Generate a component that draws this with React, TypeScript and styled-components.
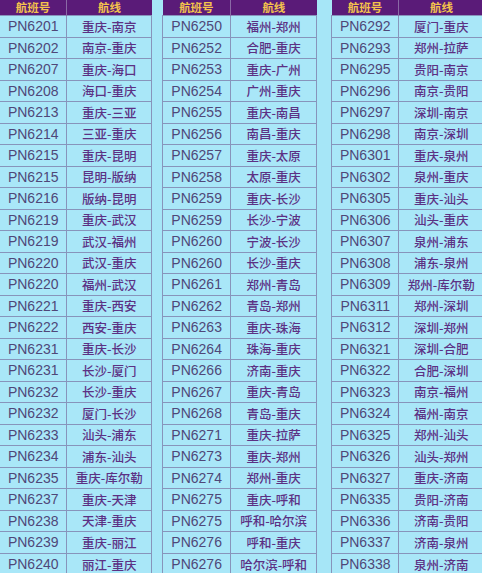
import React from "react";
import styled, { createGlobalStyle } from "styled-components";

const GlobalStyle = createGlobalStyle`
html, body {
    margin: 0;
    padding: 0;
    background: #a6e6f7;
    overflow: hidden;
}
`

const Page = styled.div`
display: flex;
align-items: flex-start;
width: 482px;
height: 573px;
overflow: hidden;
background: #a6e6f7;
`

interface TableProps {
    $width: number,
    $gap: number,
}
const Table = styled.table<TableProps>`
width: ${props => props.$width}px;
margin-left: ${props => props.$gap}px;
flex-shrink: 0;
border-collapse: collapse;
table-layout: fixed;
background: #a9e7f8;
`

const HeadCell = styled.th`
height: 15px;
padding: 0;
background: #5a1b78;
color: #f4c34c;
font-family: "Noto Sans CJK SC", sans-serif;
font-size: 11.5px;
font-weight: 700;
line-height: 15px;
text-align: center;
border-right: 1px solid #8a6aa6;
&:last-child{
    border-right: none;
}
`

const Row = styled.tr`
height: 21.5px;
border-top: 1px solid #8794bb;
`

interface CellProps {
    $code?: boolean,
}
const Cell = styled.td<CellProps>`
padding: 0;
text-align: center;
border-left: 1px solid #8794bb;
border-right: 1px solid #8794bb;
white-space: nowrap;
overflow: hidden;
${props => props.$code
    ? `
    font-family: "Liberation Sans", Arial, sans-serif;
    font-size: 14px;
    color: #4f4778;
    width: 44%;
    `
    : `
    font-family: "Noto Sans CJK SC", sans-serif;
    font-size: 12.5px;
    font-weight: 500;
    color: #5c3184;
    `
}
`

type Flight = [string, string];

const left: Flight[] = [
    ["PN6201", "重庆-南京"], ["PN6202", "南京-重庆"], ["PN6207", "重庆-海口"], ["PN6208", "海口-重庆"],
    ["PN6213", "重庆-三亚"], ["PN6214", "三亚-重庆"], ["PN6215", "重庆-昆明"], ["PN6215", "昆明-版纳"],
    ["PN6216", "版纳-昆明"], ["PN6219", "重庆-武汉"], ["PN6219", "武汉-福州"], ["PN6220", "武汉-重庆"],
    ["PN6220", "福州-武汉"], ["PN6221", "重庆-西安"], ["PN6222", "西安-重庆"], ["PN6231", "重庆-长沙"],
    ["PN6231", "长沙-厦门"], ["PN6232", "长沙-重庆"], ["PN6232", "厦门-长沙"], ["PN6233", "汕头-浦东"],
    ["PN6234", "浦东-汕头"], ["PN6235", "重庆-库尔勒"], ["PN6237", "重庆-天津"], ["PN6238", "天津-重庆"],
    ["PN6239", "重庆-丽江"], ["PN6240", "丽江-重庆"],
];

const middle: Flight[] = [
    ["PN6250", "福州-郑州"], ["PN6252", "合肥-重庆"], ["PN6253", "重庆-广州"], ["PN6254", "广州-重庆"],
    ["PN6255", "重庆-南昌"], ["PN6256", "南昌-重庆"], ["PN6257", "重庆-太原"], ["PN6258", "太原-重庆"],
    ["PN6259", "重庆-长沙"], ["PN6259", "长沙-宁波"], ["PN6260", "宁波-长沙"], ["PN6260", "长沙-重庆"],
    ["PN6261", "郑州-青岛"], ["PN6262", "青岛-郑州"], ["PN6263", "重庆-珠海"], ["PN6264", "珠海-重庆"],
    ["PN6266", "济南-重庆"], ["PN6267", "重庆-青岛"], ["PN6268", "青岛-重庆"], ["PN6271", "重庆-拉萨"],
    ["PN6273", "重庆-郑州"], ["PN6274", "郑州-重庆"], ["PN6275", "重庆-呼和"], ["PN6275", "呼和-哈尔滨"],
    ["PN6276", "呼和-重庆"], ["PN6276", "哈尔滨-呼和"],
];

const right: Flight[] = [
    ["PN6292", "厦门-重庆"], ["PN6293", "郑州-拉萨"], ["PN6295", "贵阳-南京"], ["PN6296", "南京-贵阳"],
    ["PN6297", "深圳-南京"], ["PN6298", "南京-深圳"], ["PN6301", "重庆-泉州"], ["PN6302", "泉州-重庆"],
    ["PN6305", "重庆-汕头"], ["PN6306", "汕头-重庆"], ["PN6307", "泉州-浦东"], ["PN6308", "浦东-泉州"],
    ["PN6309", "郑州-库尔勒"], ["PN6311", "郑州-深圳"], ["PN6312", "深圳-郑州"], ["PN6321", "深圳-合肥"],
    ["PN6322", "合肥-深圳"], ["PN6323", "南京-福州"], ["PN6324", "福州-南京"], ["PN6325", "郑州-汕头"],
    ["PN6326", "汕头-郑州"], ["PN6327", "重庆-济南"], ["PN6335", "贵阳-济南"], ["PN6336", "济南-贵阳"],
    ["PN6337", "济南-泉州"], ["PN6338", "泉州-济南"],
];

type FlightTableProps = {
    rows: Flight[],
    width: number,
    gap: number,
};
const FlightTable = ({ rows, width, gap }: FlightTableProps) => (
    <Table $width={width} $gap={gap}>
        <thead>
            <tr>
                <HeadCell style={{ width: "44%" }}>航班号</HeadCell>
                <HeadCell>航线</HeadCell>
            </tr>
        </thead>
        <tbody>
            {rows.map(([code, route], i) => (
                <Row key={i}>
                    <Cell $code>{code}</Cell>
                    <Cell>{route}</Cell>
                </Row>
            ))}
        </tbody>
    </Table>
);

export default function App() {
    return (
        <>
            <GlobalStyle />
            <Page>
                <FlightTable rows={left} width={153} gap={-1} />
                <FlightTable rows={middle} width={155} gap={10} />
                <FlightTable rows={right} width={153} gap={14} />
            </Page>
        </>
    );
}
